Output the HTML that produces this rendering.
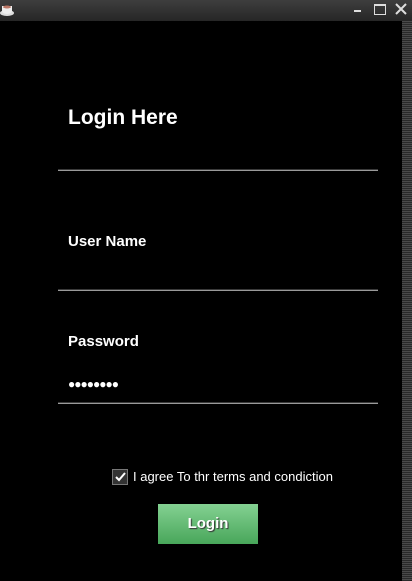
<!DOCTYPE html>
<html><head><style>
body{margin:0;width:412px;height:581px;background:#000;position:relative;overflow:hidden;font-family:"Liberation Sans",sans-serif;color:#fff}
.tb{position:absolute;left:0;top:0;width:412px;height:21px;background:linear-gradient(#3e3e3e,#262626)}
.sb{position:absolute;left:402px;top:21px;width:10px;height:560px;background:repeating-linear-gradient(#4a4a4a 0 1px,#2a2a2a 1px 2px)}
.ln{position:absolute;left:58px;width:320px;height:2px;background:linear-gradient(#3a3a3a 50%,#9a9a9a 50%)}
.t{position:absolute;font-weight:bold}
</style></head><body>
<div class="tb">
<svg width="16" height="14" style="position:absolute;left:0;top:3px"><ellipse cx="7" cy="10" rx="7" ry="3" fill="#ddd"/><path d="M2 3h10v5a5 3 0 0 1-10 0z" fill="#eee"/><ellipse cx="7" cy="4" rx="4" ry="1.5" fill="#b76"/></svg>
<div style="position:absolute;left:354px;top:10px;width:7px;height:2px;background:#ddd"></div>
<div style="position:absolute;left:374px;top:4px;width:10px;height:8px;border:1px solid #ddd;border-top-width:2px"></div>
<svg width="12" height="12" style="position:absolute;left:395px;top:3px"><path d="M1 1L11 11M11 1L1 11" stroke="#ddd" stroke-width="2"/></svg>
</div>
<div class="sb"></div>
<div class="t" style="left:68px;top:106px;font-size:21px">Login Here</div>
<div class="ln" style="top:169px"></div>
<div class="t" style="left:68px;top:233px;font-size:15px">User Name</div>
<div class="ln" style="top:289px"></div>
<div class="t" style="left:68px;top:333px;font-size:15px">Password</div>
<div style="position:absolute;left:68px;top:377px;font-size:12px;letter-spacing:-1px">●●●●●●●●</div>
<div class="ln" style="top:402px"></div>
<div style="position:absolute;left:112px;top:469px;width:14px;height:14px;background:#333;border:1px solid #777"><svg width="14" height="14"><path d="M3 7l3 3 6-7" stroke="#fff" stroke-width="2" fill="none"/></svg></div>
<div style="position:absolute;left:133px;top:469px;font-size:13px">I agree To thr terms and condiction</div>
<div style="position:absolute;left:158px;top:504px;width:100px;height:40px;background:linear-gradient(#84d192,#48a65a);font-weight:bold;font-size:15px;text-align:center;line-height:40px;text-shadow:1px 1px 1px #333">Login</div>
</body></html>
